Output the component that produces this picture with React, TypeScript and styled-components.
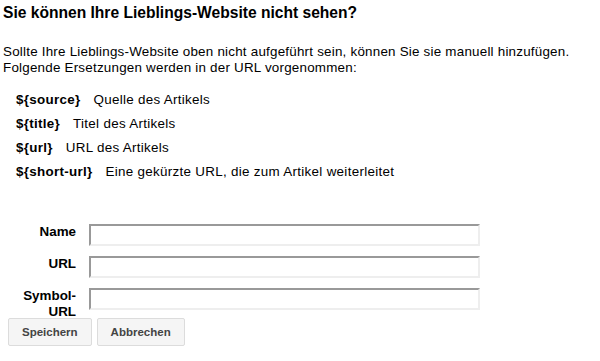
import styled, { createGlobalStyle } from 'styled-components';
import * as React from 'react';

const GlobalStyle = createGlobalStyle`
  body {
    margin: 0;
    background: #fff;
    font-family: "Liberation Sans", Arial, sans-serif;
    color: #000;
  }
`;

const Page = styled.div`
  padding: 4px 4px 0 3px;
  font-size: 13.4px;
`;

const Heading = styled.h2`
  margin: 0;
  font-size: 15.6px;
  font-weight: bold;
  line-height: 18px;
`;

const Intro = styled.p`
  margin: 22px 0 0 0;
  line-height: 16px;
  letter-spacing: 0.22px;
`;

const Substitutions = styled.div`
  display: flex;
  flex-direction: column;
  margin: 11px 0 0 13px;
  letter-spacing: 0.3px;
`;

const Row = styled.div`
  display: flex;
  align-items: center;
  gap: 13px;
  height: 24px;
`;

const Key = styled.span`
  font-weight: bold;
`;

const Form = styled.div`
  display: grid;
  grid-template-columns: 73px 391px;
  column-gap: 13px;
  row-gap: 10px;
  margin-top: 41px;
`;

const Label = styled.label`
  font-weight: bold;
  text-align: right;
  line-height: 16px;
`;

const Input = styled.input`
  box-sizing: border-box;
  width: 391px;
  height: 22px;
  margin: 0;
  border-style: solid;
  border-width: 2px;
  border-color: #999 #eee #eee #999;
  background: #fff;
  padding: 0 3px;
  font: inherit;
`;

const Buttons = styled.div`
  display: flex;
  gap: 5px;
  margin-top: -2px;
  padding-left: 8px;
`;

const Button = styled.button`
  height: 28px;
  padding: 0 13px;
  border: 1px solid #dcdcdc;
  border-radius: 2px;
  background: #f5f5f5;
  color: #444;
  font-family: "Liberation Sans", Arial, sans-serif;
  font-size: 11.5px;
  font-weight: bold;
`;

const items = [
  ['${source}', 'Quelle des Artikels'],
  ['${title}', 'Titel des Artikels'],
  ['${url}', 'URL des Artikels'],
  ['${short-url}', 'Eine gekürzte URL, die zum Artikel weiterleitet'],
];

export default function App() {
  return (
    <>
      <GlobalStyle />
      <Page>
        <Heading>Sie können Ihre Lieblings-Website nicht sehen?</Heading>
        <Intro>
          Sollte Ihre Lieblings-Website oben nicht aufgeführt sein, können Sie sie manuell hinzufügen.
          <br />
          Folgende Ersetzungen werden in der URL vorgenommen:
        </Intro>
        <Substitutions>
          {items.map(([k, v]) => (
            <Row key={k}>
              <Key>{k}</Key>
              <span>{v}</span>
            </Row>
          ))}
        </Substitutions>
        <Form>
          <Label>Name</Label>
          <Input type="text" />
          <Label>URL</Label>
          <Input type="text" />
          <Label>
            Symbol-
            <br />
            URL
          </Label>
          <Input type="text" />
        </Form>
      </Page>
      <Buttons>
        <Button type="button">Speichern</Button>
        <Button type="button">Abbrechen</Button>
      </Buttons>
    </>
  );
}
